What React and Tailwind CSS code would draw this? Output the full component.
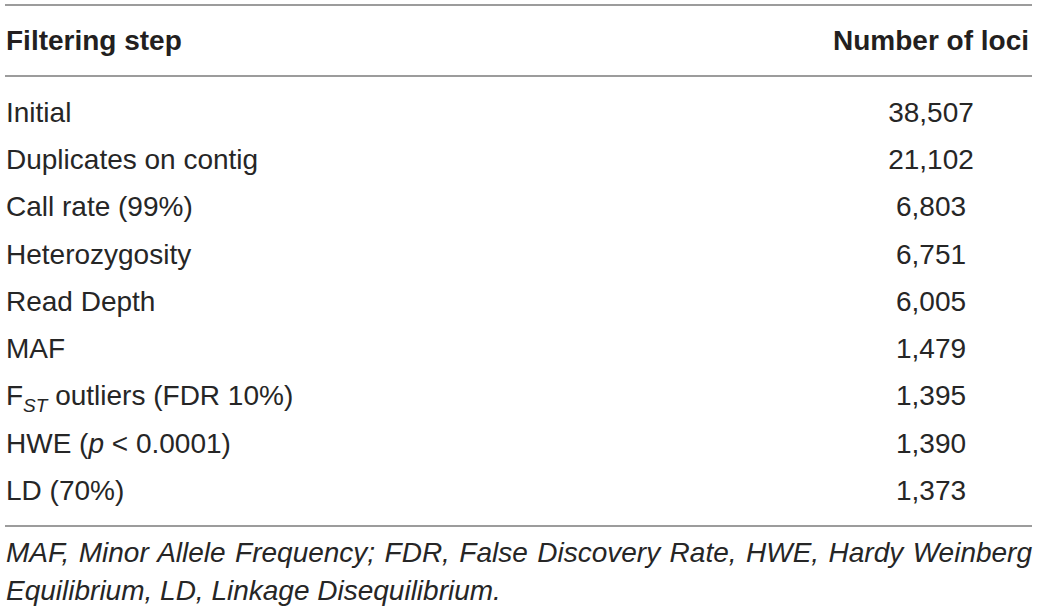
const rows = [
  ["Initial", "38,507"],
  ["Duplicates on contig", "21,102"],
  ["Call rate (99%)", "6,803"],
  ["Heterozygosity", "6,751"],
  ["Read Depth", "6,005"],
  ["MAF", "1,479"],
  ["FST", "1,395"],
  ["HWE", "1,390"],
  ["LD (70%)", "1,373"],
];

const Label = ({ text }) => {
  if (text === "FST")
    return (
      <span>
        F<sub className="italic text-[19px] align-[-2px]">ST</sub> outliers (FDR 10%)
      </span>
    );
  if (text === "HWE")
    return (
      <span>
        HWE (<i>p</i> &lt; 0.0001)
      </span>
    );
  return <span>{text}</span>;
};

export default function App() {
  return (
    <div className="bg-white w-[1039px] h-[612px] overflow-hidden pt-[4px] pl-[5px] pr-[7px] text-[#262626] font-['Liberation_Sans',Arial,sans-serif]">
      <div className="border-t-2 border-[#9c9c9c]">
        <div className="grid grid-cols-[1fr_202px] h-[71px] items-center border-b-2 border-[#9c9c9c] text-[28px] font-bold text-[#231f20]">
          <div className="pl-[1px]">Filtering step</div>
          <div className="text-center">Number of loci</div>
        </div>
        <div className="pt-[12px] pb-[10px] border-b-2 border-[#9c9c9c]">
          {rows.map(([label, n]) => (
            <div key={label} className="grid grid-cols-[1fr_202px] h-[47.3px] items-center text-[28px]">
              <div className="pl-[1px]"><Label text={label} /></div>
              <div className="text-center">{n}</div>
            </div>
          ))}
        </div>
      </div>
      <p className="pl-[1px] pt-[7px] italic text-[28px] leading-[38px] text-justify">
        MAF, Minor Allele Frequency; FDR, False Discovery Rate, HWE, Hardy Weinberg Equilibrium, LD, Linkage Disequilibrium.
      </p>
    </div>
  );
}
